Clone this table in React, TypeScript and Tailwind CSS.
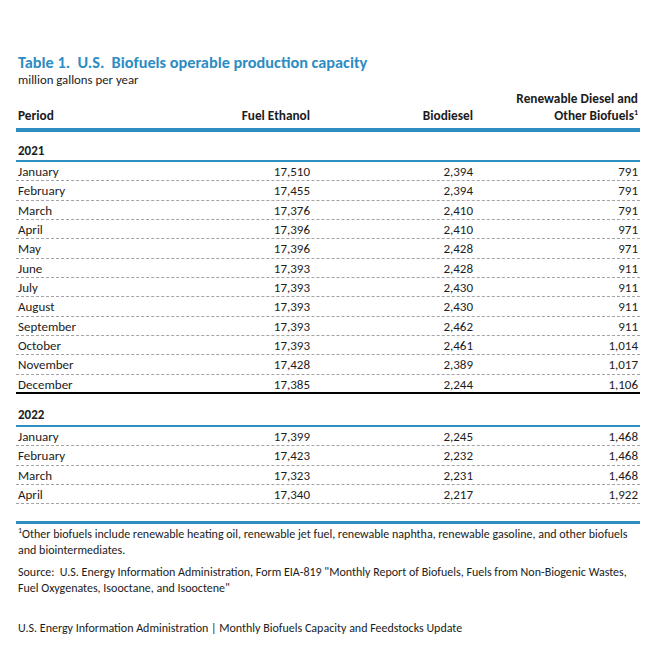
const ROWS_2021 = [
  ['January', '17,510', '2,394', '791'],
  ['February', '17,455', '2,394', '791'],
  ['March', '17,376', '2,410', '791'],
  ['April', '17,396', '2,410', '971'],
  ['May', '17,396', '2,428', '971'],
  ['June', '17,393', '2,428', '911'],
  ['July', '17,393', '2,430', '911'],
  ['August', '17,393', '2,430', '911'],
  ['September', '17,393', '2,462', '911'],
  ['October', '17,393', '2,461', '1,014'],
  ['November', '17,428', '2,389', '1,017'],
  ['December', '17,385', '2,244', '1,106'],
]

const ROWS_2022 = [
  ['January', '17,399', '2,245', '1,468'],
  ['February', '17,423', '2,232', '1,468'],
  ['March', '17,323', '2,231', '1,468'],
  ['April', '17,340', '2,217', '1,922'],
]

const GRID = 'grid grid-cols-[160px_134px_163px_167px]'

function Row({ cells, last }: { cells: string[]; last?: boolean }) {
  return (
    <div
      className={`${GRID} h-[19.33px] items-center border-b ${
        last ? 'border-b-[2px] border-solid border-black' : 'border-dashed border-[#a3a3a3]'
      }`}
    >
      <div className="pl-[2px]">{cells[0]}</div>
      <div className="text-right">{cells[1]}</div>
      <div className="text-right">{cells[2]}</div>
      <div className="text-right pr-[2px]">{cells[3]}</div>
    </div>
  )
}

export default function App() {
  return (
    <div
      className="w-[658px] h-[658px] bg-white text-[#1c1c1c] overflow-hidden"
      style={{ fontFamily: "Carlito, Calibri, 'Open Sans', 'Liberation Sans', sans-serif" }}
    >
      <div className="pl-[16px] pt-[53px] w-[640px]">
        {/* Title */}
        <h1 className="pl-[2px] text-[16.3px] leading-[19px] font-bold text-[#2c8cc3]">
          Table 1.&nbsp; U.S.&nbsp; Biofuels operable production capacity
        </h1>
        <p className="pl-[2px] text-[12.8px] leading-[16px]">million gallons per year</p>

        {/* Header */}
        <div className={`${GRID} mt-[2px] pb-[4px] border-b-[4px] border-[#2f8ec1] text-[13.3px] leading-[17px] font-bold items-end`}>
          <div className="pl-[2px]">Period</div>
          <div className="text-right">Fuel Ethanol</div>
          <div className="text-right">Biodiesel</div>
          <div className="text-right pr-[2px]">
            Renewable Diesel and
            <br />
            Other Biofuels<span className="text-[8px] leading-none align-top relative top-[1px]">1</span>
          </div>
        </div>

        {/* 2021 */}
        <div className="text-[13px]">
          <div className="pl-[2px] pt-[10px] h-[30px] leading-[18px] font-bold border-b-[2px] border-[#2f8ec1]">2021</div>
          {ROWS_2021.map((r, i) => (
            <Row key={r[0]} cells={r} last={i === ROWS_2021.length - 1} />
          ))}

          {/* 2022 */}
          <div className="pl-[2px] pt-[12px] h-[33px] leading-[18px] font-bold border-b-[2px] border-[#2f8ec1]">2022</div>
          {ROWS_2022.map((r) => (
            <Row key={'b' + r[0]} cells={r} />
          ))}
        </div>

        {/* Notes */}
        <div className="mt-[17px] border-t-[3px] border-[#2f8ec1] text-[12px] leading-[16px] pl-[2px]">
          <p className="whitespace-nowrap pt-[2px]">
            <span className="text-[8px] leading-none align-top">1</span>Other biofuels include renewable heating oil, renewable jet fuel, renewable naphtha, renewable gasoline, and other biofuels
            <br />
            and biointermediates.
          </p>
          <p className="mt-[6px] whitespace-nowrap">
            Source:&nbsp; U.S. Energy Information Administration, Form EIA-819 "Monthly Report of Biofuels, Fuels from Non-Biogenic Wastes,
            <br />
            Fuel Oxygenates, Isooctane, and Isooctene"
          </p>
          <p className="mt-[24px] whitespace-nowrap">
            U.S. Energy Information Administration | Monthly Biofuels Capacity and Feedstocks Update
          </p>
        </div>
      </div>
    </div>
  )
}
